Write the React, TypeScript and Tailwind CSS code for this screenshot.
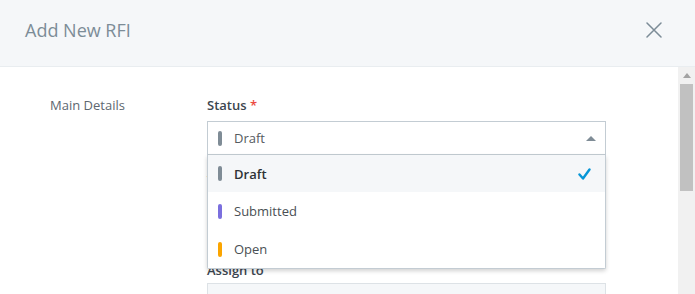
const statusOptions = [
  { label: "Draft", color: "bg-[#7f8c96]", selected: true, height: "h-[37px]" },
  { label: "Submitted", color: "bg-[#7b6fde]", selected: false, height: "h-[38px]" },
  { label: "Open", color: "bg-[#fba500]", selected: false, height: "h-[38px]" },
];

const App: React.FC = () => {
  return (
    <div
      className="w-[695px] h-[294px] overflow-hidden bg-white flex flex-col"
      style={{ fontFamily: '"Open Sans", "Noto Sans", sans-serif' }}
    >
      <div className="h-[67px] shrink-0 flex items-center justify-between bg-[#f5f7f9] border-b border-[#e9edf0] pl-[25px] pr-[33px]">
        <h2 className="text-[18px] text-[#7c8c97] pb-[5px]">Add New RFI</h2>
        <button className="flex items-center justify-center text-[#7c8c97] pb-[6px]">
          <svg width="16" height="16" viewBox="0 0 16 16" fill="none">
            <path
              d="M1 1L15 15M15 1L1 15"
              stroke="currentColor"
              strokeWidth="1.5"
              strokeLinecap="round"
            />
          </svg>
        </button>
      </div>

      <div className="flex flex-1 min-h-0">
        <div className="flex-1 flex items-start pl-[50px] pt-[29px] text-[13px] leading-[18px]">
          <div className="w-[157px] shrink-0 text-[#5d6770]">Main Details</div>
          <div className="w-[399px] shrink-0">
            <p className="font-semibold text-[#3c4650] mb-[7px]">
              Status <span className="text-[#ec4a41]">*</span>
            </p>
            <div className="relative mb-[16px]">
              <div className="h-[34px] flex items-center justify-between border border-[#c3ccd3] pl-[10px] pr-[8px] bg-white">
                <div className="flex items-center gap-[12px]">
                  <span className="w-[4px] h-[15px] rounded-full bg-[#7f8c96]" />
                  <span className="text-[#555b60]">Draft</span>
                </div>
                <svg width="12" height="6" viewBox="0 0 12 6">
                  <path d="M1 6L6 1L11 6Z" fill="#7f8c96" />
                </svg>
              </div>
              <div className="absolute left-0 right-0 top-full z-10 bg-white border border-t-0 border-[#c3ccd3] rounded-b-[2px] shadow-[0_2px_4px_rgba(0,0,0,0.18)]">
                {statusOptions.map((option) => (
                  <div
                    key={option.label}
                    className={`${option.height} flex items-center justify-between pl-[10px] pr-[14px] ${
                      option.selected ? "bg-[#f5f7f9]" : "bg-white"
                    }`}
                  >
                    <div className="flex items-center gap-[12px]">
                      <span className={`w-[4px] h-[15px] rounded-full ${option.color}`} />
                      <span
                        className={
                          option.selected
                            ? "font-semibold text-[#2e3236]"
                            : "text-[#4a4f54]"
                        }
                      >
                        {option.label}
                      </span>
                    </div>
                    {option.selected && (
                      <svg width="13" height="12" viewBox="0 0 13 12" fill="none">
                        <path
                          d="M1.5 6.5L5 10.5L11.5 1.5"
                          stroke="#0696d7"
                          strokeWidth="2.4"
                          strokeLinecap="round"
                          strokeLinejoin="round"
                        />
                      </svg>
                    )}
                  </div>
                ))}
              </div>
            </div>

            <p className="font-semibold text-[#3c4650] mb-[7px]">Title</p>
            <div className="h-[34px] border border-[#dde2e6] bg-[#f5f7f9] mb-[31px]" />

            <p className="font-semibold text-[#3c4650] mb-[4px]">Assign to</p>
            <div className="h-[34px] border border-[#dde2e6] bg-[#f5f7f9]" />
          </div>
        </div>

        <div className="w-[17px] shrink-0 bg-[#f1f1f1] flex flex-col items-center">
          <div className="h-[17px] flex items-center justify-center">
            <svg width="8" height="5" viewBox="0 0 8 5">
              <path d="M0 5L4 0L8 5Z" fill="#a3a3a3" />
            </svg>
          </div>
          <div className="w-[13px] h-[107px] bg-[#c1c1c1]" />
        </div>
      </div>
    </div>
  );
};

export default App;
